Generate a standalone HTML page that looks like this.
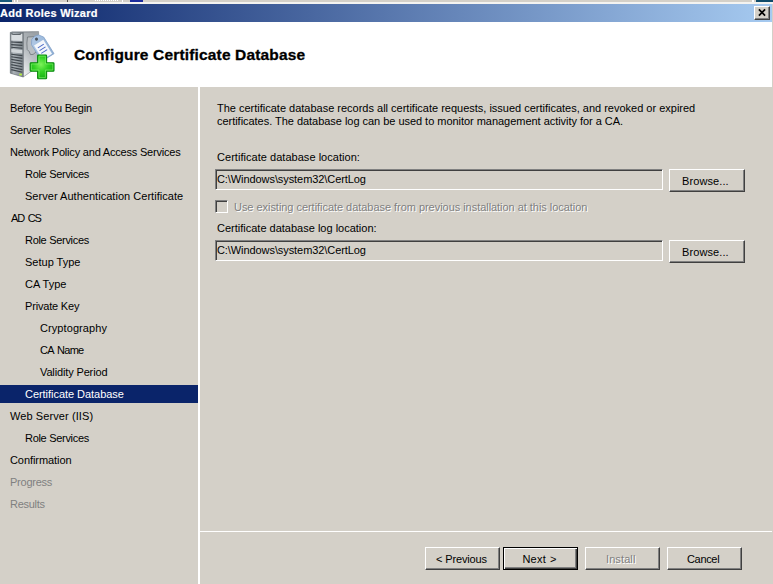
<!DOCTYPE html>
<html><head><meta charset="utf-8"><title>Add Roles Wizard</title>
<style>
html,body{margin:0;padding:0;}
body{width:773px;height:584px;background:#d4d0c8;position:relative;overflow:hidden;font-family:"Liberation Sans",sans-serif;font-size:11px;color:#000;}
.abs{position:absolute;}
.t{position:absolute;white-space:nowrap;line-height:14px;height:14px;}
.nav{position:absolute;white-space:nowrap;line-height:14px;height:14px;}
.btn{position:absolute;box-sizing:border-box;height:23px;width:75px;background:#d4d0c8;border:1px solid;border-color:#fff #404040 #404040 #fff;box-shadow:inset -1px -1px 0 #808080, inset 1px 1px 0 #d4d0c8;text-align:left;line-height:14px;padding-top:4px;font-size:11px;white-space:nowrap;}
.inp{position:absolute;box-sizing:border-box;height:21px;background:#d4d0c8;border:1px solid;border-color:#808080 #fff #fff #808080;box-shadow:inset 1px 1px 0 #404040, inset -1px -1px 0 #d4d0c8;line-height:19px;padding-left:1px;white-space:nowrap;letter-spacing:-0.08px;}
</style></head><body>
<!-- top strip from background window -->
<div class="abs" style="left:0;top:0;width:773px;height:2px;background:#d4d0c8"></div>
<div class="abs" style="left:0;top:0;width:12px;height:1.7px;background:#1a5a7a"></div>
<div class="abs" style="left:14px;top:0;width:1px;height:1.7px;background:#fff"></div>
<div class="abs" style="left:17px;top:0;width:1px;height:1.7px;background:#fff"></div>
<div class="abs" style="left:67px;top:0;width:1px;height:1.7px;background:#55524c"></div>
<div class="abs" style="left:95px;top:0;width:23px;height:1px;background:repeating-linear-gradient(90deg,#fff 0 1px,#d4d0c8 1px 2px)"></div>
<div class="abs" style="left:122px;top:0;width:1px;height:1.7px;background:#fff"></div>
<div class="abs" style="left:130px;top:0;width:13px;height:1.7px;background:#1c2c9c"></div>
<div class="abs" style="left:752px;top:0;width:2px;height:1.7px;background:#fff"></div>
<div class="abs" style="left:756px;top:0;width:17px;height:1.7px;background:#0e4a6a"></div>
<div class="abs" style="left:0;top:1.7px;width:773px;height:2.3px;background:#f4f3f0"></div>
<!-- title bar -->
<div class="abs" style="left:0;top:3.5px;width:772px;height:18.5px;background:linear-gradient(90deg,#0a246a 0%,#a6caf0 100%);"></div>
<div class="t" style="left:0px;top:6px;color:#fff;font-weight:bold;font-size:11px;letter-spacing:0.27px;-webkit-text-stroke:0.2px #fff">Add Roles Wizard</div>
<div class="abs" style="left:754px;top:6px;width:16px;height:14px;box-sizing:border-box;background:#d4d0c8;border:1px solid;border-color:#fff #404040 #404040 #fff;box-shadow:inset -1px -1px 0 #808080;">
<svg width="14" height="12" viewBox="0 0 14 12" style="position:absolute;left:0;top:0"><path d="M3.9 2.4 L10.1 8.6 M10.1 2.4 L3.9 8.6" stroke="#000" stroke-width="1.7" fill="none"/></svg>
</div>
<!-- header -->
<div class="abs" style="left:0;top:22px;width:772px;height:65px;background:#fff"></div>
<svg class="abs" style="left:0;top:22px" width="70" height="65" viewBox="0 22 70 65">
<defs>
<linearGradient id="gs" x1="0.6" y1="0" x2="0.2" y2="1"><stop offset="0" stop-color="#9ba1a6"/><stop offset="0.5" stop-color="#b9bec2"/><stop offset="1" stop-color="#eceeef"/></linearGradient>
<linearGradient id="gf" x1="0" y1="0" x2="1" y2="0"><stop offset="0" stop-color="#6f777d"/><stop offset="0.25" stop-color="#aab1b6"/><stop offset="1" stop-color="#7d858b"/></linearGradient>
<linearGradient id="gt" x1="0" y1="0" x2="1" y2="1"><stop offset="0" stop-color="#b4cbe6"/><stop offset="1" stop-color="#8fb0d6"/></linearGradient>
<radialGradient id="gp" cx="0.45" cy="0.4" r="0.7"><stop offset="0" stop-color="#7df25a"/><stop offset="0.45" stop-color="#2fd022"/><stop offset="1" stop-color="#0fa50f"/></radialGradient>
<filter id="bl" x="-10%" y="-10%" width="120%" height="120%"><feGaussianBlur stdDeviation="0.35"/></filter>
</defs>
<g filter="url(#bl)">
<!-- side face -->
<path d="M23.2 32.2 L38.6 31.6 L38.9 66 L23.2 77 Z" fill="url(#gs)" stroke="#7b8186" stroke-width="0.6"/>
<!-- top edge -->
<path d="M10.3 32.6 L12 31.4 L38.6 31.4 L23.2 32.8 Z" fill="#8a9095"/>
<!-- front face -->
<path d="M10.3 32.4 L23.2 32.4 L23.2 77 L10.3 73.2 Z" fill="url(#gf)" stroke="#5d656b" stroke-width="0.6"/>
<!-- top drive light panel -->
<path d="M11.3 34 L22.3 34 L22.3 41 L11.3 40.6 Z" fill="#d9dde0"/>
<path d="M11.5 33.6 Q16 35 21 33.4 L21 34.4 Q16 35.6 11.5 34.6 Z" fill="#3b4248"/>
<!-- slats -->
<g stroke="#3f464c" stroke-width="1.1">
<path d="M11.2 42 L22.4 42.6"/><path d="M11.2 44.6 L22.4 45.4"/><path d="M11.2 47.2 L22.4 48.2"/>
</g>
<path d="M11.3 49 L22.3 50 L22.3 53.4 L11.3 52.2 Z" fill="#d0d5d8"/>
<g stroke="#3f464c" stroke-width="1.1">
<path d="M11.2 54.2 L22.4 55.6"/><path d="M11.2 56.8 L22.4 58.4"/><path d="M11.2 59.4 L22.4 61.2"/><path d="M11.2 62 L22.4 64"/><path d="M11.2 64.6 L22.4 66.8"/><path d="M11.2 67.2 L22.4 69.6"/><path d="M11.2 69.6 L22.4 72.2"/>
</g>
<rect x="19.3" y="73.6" width="2.6" height="1.8" fill="#b6f23a"/>
<!-- shield outline on side -->
<path d="M27.5 37 L36 36.6 L36 52 Q33 55.5 30.5 54.6 Q29.5 51 27.2 49.5 Q26.4 43 27.5 37 Z" fill="#b9bec2" stroke="#6e757a" stroke-width="0.8"/>
<!-- tag -->
<g transform="rotate(-32 42 47)">
<path d="M34.3 39.5 L37.5 35 Q41.5 33 45.5 35 L48.7 39.5 L48.7 59 L34.3 59 Z" fill="url(#gt)" stroke="#7f9fc6" stroke-width="0.7"/>
<rect x="36" y="41.5" width="11" height="16.5" fill="#f4f7fb"/>
<circle cx="41.5" cy="37.4" r="1.5" fill="#4b5560"/>
<g stroke="#4766c4" stroke-width="0.9"><path d="M38 45.6 H45"/><path d="M38 48.8 H45"/><path d="M38 52 H45"/></g>
</g>
<!-- plus -->
<path d="M38.4 55 H45.8 Q46.6 55 46.6 55.8 V62.8 H53.2 Q54 62.8 54 63.6 V70.4 Q54 71.2 53.2 71.2 H46.6 V78 Q46.6 78.8 45.8 78.8 H38.4 Q37.6 78.8 37.6 78 V71.2 H31 Q30.2 71.2 30.2 70.4 V63.6 Q30.2 62.8 31 62.8 H37.6 V55.8 Q37.6 55 38.4 55 Z" fill="url(#gp)" stroke="#0a8a0e" stroke-width="1.1"/>
<path d="M39 56.2 H45.4 V64 H52.8 V70 H45.4 V77.6 H39 V70 H31.4 V64 H39 Z" fill="none" stroke="#8ff57a" stroke-width="0.7" opacity="0.8"/>
</g>
</svg>
<div class="t" style="left:74px;top:45px;font-size:15.5px;font-weight:bold;line-height:20px;height:20px;letter-spacing:0.16px;-webkit-text-stroke:0.3px #000">Configure Certificate Database</div>
<!-- sidebar divider -->
<div class="abs" style="left:198px;top:87px;width:2px;height:497px;background:#fff"></div>
<div class="abs" style="left:200px;top:531px;width:572px;height:1px;background:#fff"></div>
<!-- nav -->
<div class="abs" style="left:0;top:385px;width:198px;height:18px;background:#0a246a"></div>
<div class="nav" style="left:10px;top:101px;letter-spacing:-0.2px">Before You Begin</div>
<div class="nav" style="left:10px;top:123px;letter-spacing:-0.25px">Server Roles</div>
<div class="nav" style="left:10px;top:145px;letter-spacing:-0.2px">Network Policy and Access Services</div>
<div class="nav" style="left:25px;top:167px;letter-spacing:-0.3px">Role Services</div>
<div class="nav" style="left:25px;top:189px;letter-spacing:0.03px">Server Authentication Certificate</div>
<div class="nav" style="left:11px;top:211px;letter-spacing:-1.2px;word-spacing:2px">AD CS</div>
<div class="nav" style="left:25px;top:233px;letter-spacing:-0.3px">Role Services</div>
<div class="nav" style="left:25px;top:255px">Setup Type</div>
<div class="nav" style="left:25px;top:277px">CA Type</div>
<div class="nav" style="left:25px;top:299px;letter-spacing:-0.18px">Private Key</div>
<div class="nav" style="left:40px;top:321px;letter-spacing:0.08px">Cryptography</div>
<div class="nav" style="left:40px;top:343px;letter-spacing:-0.75px;word-spacing:1.6px">CA Name</div>
<div class="nav" style="left:40px;top:365px;letter-spacing:-0.14px">Validity Period</div>
<div class="nav" style="left:25px;top:387px;color:#fff;letter-spacing:-0.04px">Certificate Database</div>
<div class="nav" style="left:10px;top:409px;letter-spacing:0.09px">Web Server (IIS)</div>
<div class="nav" style="left:25px;top:431px;letter-spacing:-0.3px">Role Services</div>
<div class="nav" style="left:10px;top:453px;letter-spacing:-0.07px">Confirmation</div>
<div class="nav" style="left:10px;top:475px;color:#808080;letter-spacing:-0.24px">Progress</div>
<div class="nav" style="left:10px;top:497px;color:#808080;letter-spacing:-0.28px">Results</div>
<!-- content -->
<div class="t" style="left:217px;top:101px;letter-spacing:-0.005px">The certificate database records all certificate requests, issued certificates, and revoked or expired</div>
<div class="t" style="left:217px;top:114px;letter-spacing:-0.033px">certificates. The database log can be used to monitor management activity for a CA.</div>
<div class="t" style="left:217px;top:150px;letter-spacing:0.035px">Certificate database location:</div>
<div class="inp" style="left:215px;top:169px;width:448px">C:\Windows\system32\CertLog</div>
<div class="btn" style="left:669px;top:169px;width:76px;padding-left:12px;letter-spacing:0.1px">Browse...</div>
<div class="abs" style="left:215px;top:200px;width:13px;height:13px;box-sizing:border-box;background:#d4d0c8;border:1px solid;border-color:#808080 #fff #fff #808080;box-shadow:inset 1px 1px 0 #404040;"></div>
<div class="t" style="left:234px;top:200px;color:#808080;text-shadow:1px 1px 0 #fff;letter-spacing:-0.04px">Use existing certificate database from previous installation at this location</div>
<div class="t" style="left:217px;top:221px">Certificate database log location:</div>
<div class="inp" style="left:215px;top:240px;width:448px">C:\Windows\system32\CertLog</div>
<div class="btn" style="left:669px;top:240px;width:76px;padding-left:12px;letter-spacing:0.1px">Browse...</div>
<!-- bottom buttons -->
<div class="btn" style="left:425px;top:547px;padding-left:10px;letter-spacing:-0.14px">&lt; Previous</div>
<div class="btn" style="left:503px;top:547px;border-color:#000;box-shadow:inset 1px 1px 0 #fff, inset -1px -1px 0 #404040, inset -2px -2px 0 #808080;padding-left:18.4px;letter-spacing:0.25px;word-spacing:0.6px">Next &gt;</div>
<div class="btn" style="left:585px;top:547px;color:#808080;text-shadow:1px 1px 0 #fff;padding-left:20px;letter-spacing:0.1px">Install</div>
<div class="btn" style="left:667px;top:547px;padding-left:19px;letter-spacing:-0.33px">Cancel</div>
</body></html>
